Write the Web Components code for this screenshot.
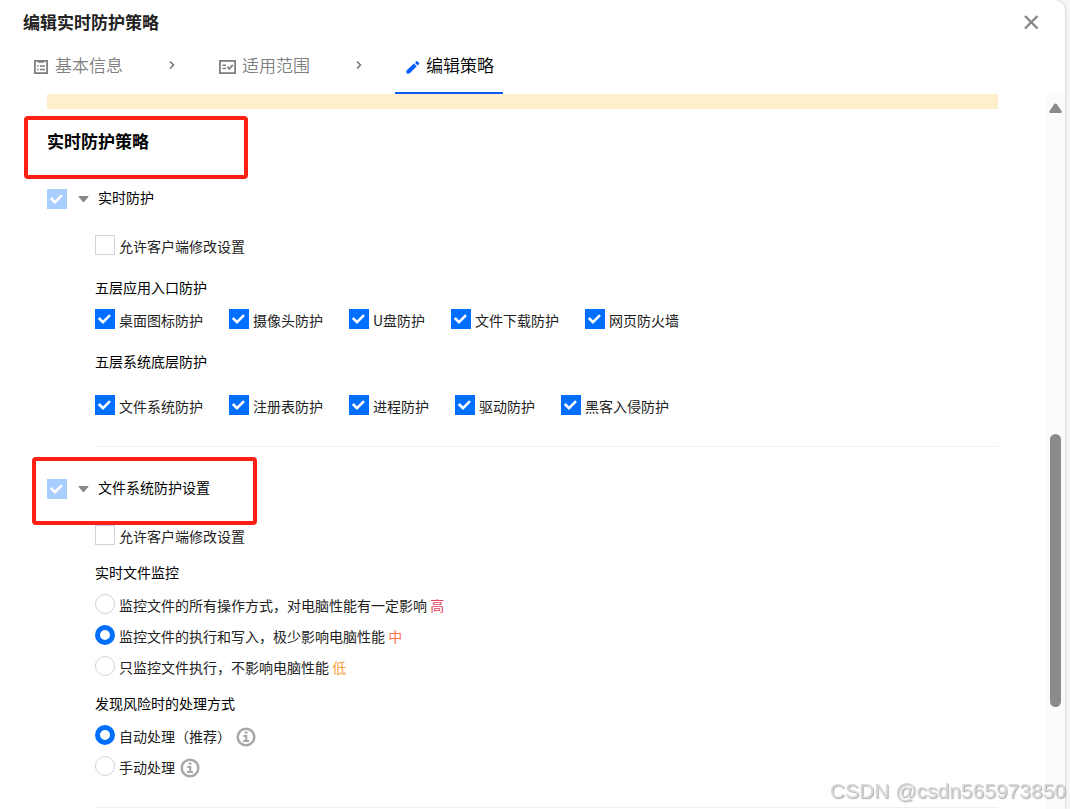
<!DOCTYPE html>
<html lang="zh-CN">
<head>
<meta charset="UTF-8">
<meta name="viewport" content="width=device-width, initial-scale=1">
<title>编辑实时防护策略</title>
<style>
    html, body {
        height: 100%;
        margin: 0;
    }
    body {
        background: #f6f6f6;
        color: #222;
        font: 14px/20px "Noto Sans CJK SC", sans-serif;
        overflow: hidden;
    }
</style>
</head>
<body>
<policy-dialog heading="编辑实时防护策略">
    <step-bar slot="steps">
        <step-item icon="list">基本信息</step-item>
        <step-item icon="scope">适用范围</step-item>
        <step-item icon="pencil" active>编辑策略</step-item>
    </step-bar>

    <section-title>实时防护策略</section-title>

    <policy-group heading="实时防护">
        <check-option>允许客户端修改设置</check-option>
        <option-set heading="五层应用入口防护">
            <check-option checked>桌面图标防护</check-option>
            <check-option checked>摄像头防护</check-option>
            <check-option checked>U盘防护</check-option>
            <check-option checked>文件下载防护</check-option>
            <check-option checked>网页防火墙</check-option>
        </option-set>
        <option-set heading="五层系统底层防护" loose>
            <check-option checked>文件系统防护</check-option>
            <check-option checked>注册表防护</check-option>
            <check-option checked>进程防护</check-option>
            <check-option checked>驱动防护</check-option>
            <check-option checked>黑客入侵防护</check-option>
        </option-set>
    </policy-group>

    <policy-group heading="文件系统防护设置" marked>
        <check-option>允许客户端修改设置</check-option>
        <radio-set heading="实时文件监控">
            <radio-option>监控文件的所有操作方式，对电脑性能有一定影响 <level-tag level="high">高</level-tag></radio-option>
            <radio-option checked>监控文件的执行和写入，极少影响电脑性能 <level-tag level="mid">中</level-tag></radio-option>
            <radio-option>只监控文件执行，不影响电脑性能 <level-tag level="low">低</level-tag></radio-option>
        </radio-set>
        <radio-set heading="发现风险时的处理方式">
            <radio-option checked>自动处理（推荐）<info-icon slot="extra"></info-icon></radio-option>
            <radio-option>手动处理<info-icon slot="extra"></info-icon></radio-option>
        </radio-set>
    </policy-group>
</policy-dialog>
<water-mark>CSDN @csdn565973850</water-mark>

<script>
const ICONS = {
    list: `<svg width="16" height="16" viewBox="0 0 16 16" fill="none" stroke="currentColor">
        <rect x="1.9" y="1.9" width="12.2" height="12.2" stroke-width="1.8"/>
        <path d="M5 2.8h6" stroke-width="2"/>
        <path d="M4 7h1.6M7 7h5M4 10.5h1.6M7 10.5h5" stroke-width="1.6"/>
    </svg>`,
    scope: `<svg width="17" height="16" viewBox="0 0 17 16" fill="none" stroke="currentColor">
        <rect x=".9" y="1.9" width="15.2" height="12.2" stroke-width="1.8"/>
        <path d="M3.500 6.200h3.500M3.500 9.500h3.500" stroke-width="1.6"/>
        <path d="M8.300 7.500l2 2.300 3.500-4" stroke-width="1.8"/>
    </svg>`,
    pencil: `<svg width="14" height="16" viewBox="0 0 14 16" fill="currentColor">
        <path d="M.5 14.500v-3L8 4.600l2.700 2.700-7.200 7.200zM9 3.700l1.400-1.400q.5-.5 1 0l1.700 1.700q.5.5 0 1l-1.400 1.400z"/>
    </svg>`
};

class PolicyDialog extends HTMLElement {
    connectedCallback() {
        this.attachShadow({ mode: 'open' });
        this.shadowRoot.innerHTML = `
            <style>
                :host {
                    display: flex;
                    flex-direction: column;
                    height: 100%;
                    margin-right: 5px;
                    background: #fff;
                    border-radius: 0 10px 0 0;
                    box-shadow: 0 0 3px rgba(0, 0, 0, 0.25);
                }
                header {
                    display: flex;
                    justify-content: space-between;
                    align-items: center;
                    height: 44px;
                    padding: 0 24px 0 23px;
                }
                h1 {
                    margin: 0;
                    font-size: 17px;
                    line-height: 24px;
                    font-weight: 700;
                }
                button {
                    width: 20px;
                    height: 20px;
                    padding: 2px;
                    border: 0;
                    background: none;
                    color: #868686;
                }
                button svg {
                    display: block;
                }
                .body {
                    display: flex;
                    flex: 1;
                    min-height: 0;
                }
                main {
                    flex: 1;
                    padding: 0 48px 0 47px;
                    overflow: hidden;
                }
                .notice {
                    height: 15px;
                    background: #ffefcc;
                }
            </style>
            <header>
                <h1>${this.getAttribute('heading')}</h1>
                <button type="button" aria-label="关闭">
                    <svg width="16" height="16" viewBox="0 0 16 16" stroke="currentColor" stroke-width="2.4"><path d="M2 2l12.500 12.500M14.500 2L2 14.500"/></svg>
                </button>
            </header>
            <slot name="steps"></slot>
            <div class="body">
                <main>
                    <div class="notice"></div>
                    <slot></slot>
                </main>
                <scroll-track></scroll-track>
            </div>
        `;
    }
}

class ScrollTrack extends HTMLElement {
    connectedCallback() {
        this.attachShadow({ mode: 'open' });
        this.shadowRoot.innerHTML = `
            <style>
                :host {
                    display: grid;
                    grid-template-rows: 20px 320fr 273fr 102fr;
                    justify-items: center;
                    width: 19px;
                    background: #fbfbfb;
                }
                svg {
                    align-self: end;
                }
                .thumb {
                    grid-row: 3;
                    width: 11px;
                    border-radius: 6px;
                    background: #8b8b8b;
                }
            </style>
            <svg width="13" height="11" viewBox="0 0 13 11" fill="#8b8b8b"><path d="M5.200 1.200q1.300-1.300 2.600 0l4.700 6.800q.8 2-1 2h-10q-1.800 0-1-2z"/></svg>
            <div class="thumb"></div>
        `;
    }
}

class StepBar extends HTMLElement {
    connectedCallback() {
        this.attachShadow({ mode: 'open' });
        this.shadowRoot.innerHTML = `
            <style>
                :host {
                    display: flex;
                    height: 50px;
                    padding-left: 22px;
                }
            </style>
            <slot></slot>
        `;
    }
}

class StepItem extends HTMLElement {
    connectedCallback() {
        const active = this.hasAttribute('active');
        this.attachShadow({ mode: 'open' });
        this.shadowRoot.innerHTML = `
            <style>
                :host {
                    display: flex;
                    align-items: flex-start;
                    color: #808080;
                }
                a {
                    display: flex;
                    box-sizing: border-box;
                    height: 50px;
                    padding: 9px 9px 0 11px;
                    gap: 6px;
                    color: inherit;
                    text-decoration: none;
                    font-size: 17px;
                    line-height: 24px;
                    font-weight: 350;
                }
                a svg {
                    margin-top: 6px;
                }
                .arrow {
                    margin: 16px 31px 0 35px;
                }
                :host([active]) a {
                    color: #000;
                    border-bottom: 2px solid #0a5cf5;
                }
                :host([active]) a svg {
                    color: #005bff;
                }
            </style>
            <a href="#" ${active ? 'aria-current="step"' : ''}>${ICONS[this.getAttribute('icon')]}<slot></slot></a>
            ${active ? '' : '<svg class="arrow" width="10" height="10" viewBox="0 0 10 10" fill="none" stroke="#777" stroke-width="1.6"><path d="M3 1.500l3.500 3.500L3 8.500"/></svg>'}
        `;
    }
}

class SectionTitle extends HTMLElement {
    connectedCallback() {
        this.attachShadow({ mode: 'open' });
        this.shadowRoot.innerHTML = `
            <style>
                :host {
                    display: block;
                    position: relative;
                    margin: 20px 0 36px;
                }
                h2 {
                    margin: 0;
                    color: #000;
                    font-size: 17px;
                    line-height: 24px;
                    font-weight: 700;
                }
                mark-frame {
                    top: -13px;
                    left: -23px;
                    width: 224px;
                    height: 63px;
                }
            </style>
            <h2><slot></slot></h2>
            <mark-frame></mark-frame>
        `;
    }
}

// red frame laid over the part being pointed at
class MarkFrame extends HTMLElement {
    connectedCallback() {
        this.attachShadow({ mode: 'open' });
        this.shadowRoot.innerHTML = `
            <style>
                :host {
                    position: absolute;
                    box-sizing: border-box;
                    border: 4px solid #ff2015;
                    border-radius: 4px;
                    pointer-events: none;
                }
            </style>
        `;
    }
}

const CHECK_STYLE = `
    input {
        appearance: none;
        flex: none;
        box-sizing: border-box;
        width: 20px;
        height: 20px;
        margin: 0;
        border: 1px solid #d0d3de;
        background: #fff;
    }
    input:checked {
        border: 0;
        background: #006eff url("data:image/svg+xml,%3Csvg xmlns='http://www.w3.org/2000/svg' viewBox='0 0 20 20'%3E%3Cpath d='M3.8 9l4.200 4.200 7-7' fill='none' stroke='white' stroke-width='2.600'/%3E%3C/svg%3E") center / 20px 20px;
    }
    input:checked:disabled {
        background-color: #a8ceff;
    }
`;

const SET_HEADING_STYLE = `
    h3 {
        margin: 0 0 13px;
        color: #000;
        font-size: 14px;
        line-height: 18px;
        font-weight: 400;
    }
`;

class PolicyGroup extends HTMLElement {
    connectedCallback() {
        this.attachShadow({ mode: 'open' });
        this.shadowRoot.innerHTML = `
            <style>
                ${CHECK_STYLE}
                :host {
                    display: block;
                    margin-bottom: 32px;
                }
                .head {
                    display: flex;
                    align-items: center;
                    position: relative;
                    height: 20px;
                }
                .head svg {
                    margin: 0 9px 0 11px;
                }
                label {
                    padding-bottom: 4px;
                    color: #000;
                }
                .content {
                    margin-left: 48px;
                    padding: 26px 0 31px;
                    border-bottom: 1px solid #efefef;
                }
                mark-frame {
                    top: -22px;
                    left: -15px;
                    width: 225px;
                    height: 68px;
                }
            </style>
            <div class="head">
                <input type="checkbox" id="all" checked disabled>
                <svg width="11" height="8" viewBox="0 0 11 8" fill="#888"><path d="M1 1h9q1 0 .4.800l-4.200 4.900q-.7.800-1.400 0L.6 1.800Q0 1 1 1z"/></svg>
                <label for="all">${this.getAttribute('heading')}</label>
                ${this.hasAttribute('marked') ? '<mark-frame></mark-frame>' : ''}
            </div>
            <div class="content"><slot></slot></div>
        `;
    }
}

class CheckOption extends HTMLElement {
    connectedCallback() {
        this.attachShadow({ mode: 'open' });
        this.shadowRoot.innerHTML = `
            <style>
                ${CHECK_STYLE}
                :host, label {
                    display: flex;
                }
                label {
                    gap: 4px;
                }
                span {
                    padding-top: 1px;
                    margin-bottom: -1px;
                }
            </style>
            <label>
                <input type="checkbox" ${this.hasAttribute('checked') ? 'checked' : ''}>
                <span><slot></slot></span>
            </label>
        `;
    }
}

class OptionSet extends HTMLElement {
    connectedCallback() {
        this.attachShadow({ mode: 'open' });
        this.shadowRoot.innerHTML = `
            <style>
                ${SET_HEADING_STYLE}
                :host {
                    display: block;
                    margin-top: 23px;
                }
                :host([loose]) h3 {
                    margin-bottom: 25px;
                }
                div {
                    display: flex;
                    flex-wrap: wrap;
                    gap: 11px 26px;
                }
            </style>
            <h3>${this.getAttribute('heading')}</h3>
            <div role="group"><slot></slot></div>
        `;
    }
}

class RadioSet extends HTMLElement {
    connectedCallback() {
        this.attachShadow({ mode: 'open' });
        this.shadowRoot.innerHTML = `
            <style>
                ${SET_HEADING_STYLE}
                :host {
                    display: block;
                    margin-top: 18px;
                }
                div {
                    display: flex;
                    flex-direction: column;
                    gap: 11px;
                }
            </style>
            <h3>${this.getAttribute('heading')}</h3>
            <div role="radiogroup"><slot></slot></div>
        `;
        // inputs sit in separate shadow roots, so keep them exclusive here
        this.shadowRoot.addEventListener('input', e => {
            this.querySelectorAll('radio-option').forEach(option => {
                option.checked = option === e.target;
            });
        });
    }
}

class RadioOption extends HTMLElement {
    connectedCallback() {
        this.attachShadow({ mode: 'open' });
        this.shadowRoot.innerHTML = `
            <style>
                :host, label {
                    display: flex;
                }
                label {
                    gap: 4px;
                }
                input {
                    appearance: none;
                    flex: none;
                    box-sizing: border-box;
                    width: 20px;
                    height: 20px;
                    margin: 0;
                    border: 1px solid #d0d3de;
                    border-radius: 50%;
                    background: #fff;
                }
                input:checked {
                    border: 5px solid #006eff;
                }
                span {
                    padding-top: 1px;
                    margin-bottom: -1px;
                }
            </style>
            <label>
                <input type="radio" ${this.hasAttribute('checked') ? 'checked' : ''}>
                <span><slot></slot></span>
            </label>
            <slot name="extra"></slot>
        `;
    }
    set checked(value) {
        this.shadowRoot.querySelector('input').checked = value;
    }
}

class LevelTag extends HTMLElement {
    connectedCallback() {
        this.attachShadow({ mode: 'open' });
        this.shadowRoot.innerHTML = `
            <style>
                :host {
                    color: #e54563;
                }
                :host([level="mid"]) {
                    color: #ff7250;
                }
                :host([level="low"]) {
                    color: #f5a03c;
                }
            </style>
            <slot></slot>
        `;
    }
}

class InfoIcon extends HTMLElement {
    connectedCallback() {
        this.attachShadow({ mode: 'open' });
        this.shadowRoot.innerHTML = `
            <style>
                :host, svg {
                    display: block;
                }
                :host {
                    margin: 2px 0 -2px 5px;
                }
            </style>
            <svg width="20" height="20" viewBox="0 0 20 20" fill="none" stroke="#a8a8a8">
                <circle cx="10" cy="10" r="8.300" stroke-width="2.500"/>
                <path d="M8.700 5.600h2.700M7.200 9h3v5M7 14h6" stroke-width="2.200"/>
            </svg>
        `;
    }
}

class WaterMark extends HTMLElement {
    connectedCallback() {
        this.attachShadow({ mode: 'open' });
        this.shadowRoot.innerHTML = `
            <style>
                :host {
                    position: fixed;
                    right: 4px;
                    bottom: 6px;
                    color: #dadada;
                    font: 21px/24px "Liberation Sans", sans-serif;
                    text-shadow: 1px 1px 1px #aaa;
                    pointer-events: none;
                }
            </style>
            <slot></slot>
        `;
    }
}

customElements.define('mark-frame', MarkFrame);
customElements.define('scroll-track', ScrollTrack);
customElements.define('policy-dialog', PolicyDialog);
customElements.define('step-bar', StepBar);
customElements.define('step-item', StepItem);
customElements.define('section-title', SectionTitle);
customElements.define('policy-group', PolicyGroup);
customElements.define('check-option', CheckOption);
customElements.define('option-set', OptionSet);
customElements.define('radio-set', RadioSet);
customElements.define('radio-option', RadioOption);
customElements.define('level-tag', LevelTag);
customElements.define('info-icon', InfoIcon);
customElements.define('water-mark', WaterMark);
</script>
</body>
</html>
